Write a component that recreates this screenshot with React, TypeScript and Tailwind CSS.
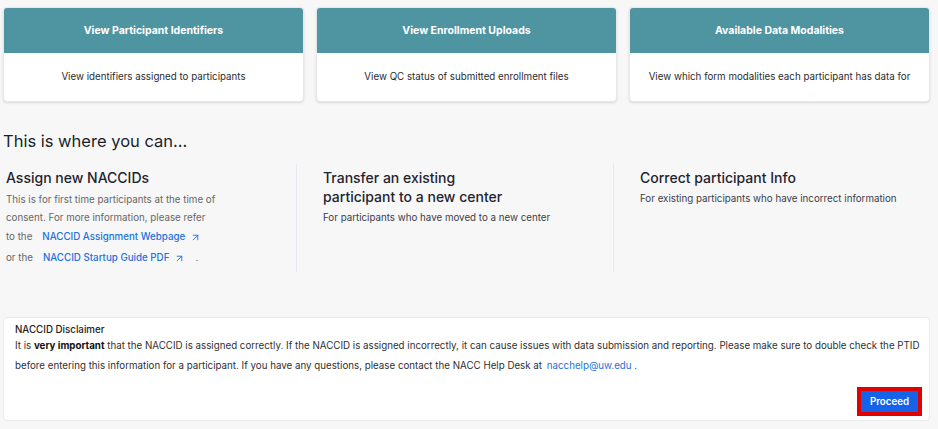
import { ArrowUpRight } from "lucide-react";

const cards = [
  { title: "View Participant Identifiers", desc: "View identifiers assigned to participants" },
  { title: "View Enrollment Uploads", desc: "View QC status of submitted enrollment files" },
  { title: "Available Data Modalities", desc: "View which form modalities each participant has data for" },
];

function DocLink({ label }: { label: string }) {
  return (
    <a className="inline-flex items-center gap-[5px] text-[#2470dc] font-medium" href="#">
      {label}
      <ArrowUpRight className="w-[11px] h-[11px]" strokeWidth={2} />
    </a>
  );
}

export default function App() {
  return (
    <div
      className="min-h-screen bg-[#f7f7f7] pl-[3px] pr-[8px] pt-[7px] text-[#1f2430]"
      style={{ fontFamily: "Inter, 'Noto Sans', sans-serif" }}
    >
      <div className="grid grid-cols-3 gap-3">
        {cards.map((c) => (
          <div
            key={c.title}
            className="rounded-[4px] overflow-hidden bg-white border border-[#e6e8ec] shadow-sm"
          >
            <div className="h-[45px] bg-[#4f95a1] flex items-center justify-center text-white font-bold text-[10.5px]">
              {c.title}
            </div>
            <div className="h-[48px] flex items-center justify-center text-[9.75px] text-[#2b2b2b]">
              {c.desc}
            </div>
          </div>
        ))}
      </div>

      <h2 className="mt-[27px] text-[16.5px] leading-[24px] text-[#1b1f2a]">This is where you can...</h2>

      <div className="mt-[11px] flex h-[108px]">
        <div className="w-[293px] pl-[3px] pt-[4px]">
          <h3 className="text-[14px] leading-[19px] font-medium">Assign new NACCIDs</h3>
          <p className="mt-[4px] w-[212px] text-[9.75px] leading-[18px] text-[#666]">
            This is for first time participants at the time of consent. For more information, please refer
          </p>
          <div className="flex items-center gap-[10px] text-[9.75px] leading-[20px] text-[#666]">
            <span>to the</span>
            <DocLink label="NACCID Assignment Webpage" />
          </div>
          <div className="flex items-center gap-[10px] text-[9.75px] leading-[22px] text-[#666]">
            <span>or the</span>
            <DocLink label="NACCID Startup Guide PDF" />
            <span>.</span>
          </div>
        </div>

        <div className="flex-1 border-l border-[#e5e8ee] pl-[26px] pt-[4px]">
          <h3 className="w-[190px] text-[14px] leading-[19px] font-medium">
            Transfer an existing participant to a new center
          </h3>
          <p className="mt-[3px] text-[9.75px] leading-[18px] text-[#3a3d48]">
            For participants who have moved to a new center
          </p>
        </div>

        <div className="flex-1 border-l border-[#e5e8ee] pl-[26px] pt-[4px]">
          <h3 className="text-[14px] leading-[19px] font-medium">Correct participant Info</h3>
          <p className="mt-[3px] text-[9.75px] leading-[18px] text-[#3a3d48]">
            For existing participants who have incorrect information
          </p>
        </div>
      </div>

      <div className="mt-[45px] bg-white border border-[#e8eaee] rounded-[4px] pl-[11px] pr-[7px] pt-[6px] pb-[4px]">
        <div className="text-[9.75px] leading-[12px] font-medium text-[#222]">NACCID Disclaimer</div>
        <p className="text-[9.75px] leading-[20px] text-[#2f2f2f]">
          It is <b className="font-bold text-[#111]">very important</b> that the NACCID is assigned correctly. If the
          NACCID is assigned incorrectly, it can cause issues with data submission and reporting. Please make sure to
          double check the PTID before entering this information for a participant. If you have any questions, please
          contact the NACC Help Desk at{" "}
          <a className="ml-[2px] text-[#2470dc]" href="#">
            nacchelp@uw.edu
          </a>{" "}
          .
        </p>
        <div className="mt-[11px] flex justify-end">
          <button className="border-4 border-[#e00000] bg-[#e00000]">
            <span className="block w-[57px] h-[21px] bg-[#1563e8] text-white text-[9.75px] font-semibold leading-[21px]">
              Proceed
            </span>
          </button>
        </div>
      </div>
    </div>
  );
}
